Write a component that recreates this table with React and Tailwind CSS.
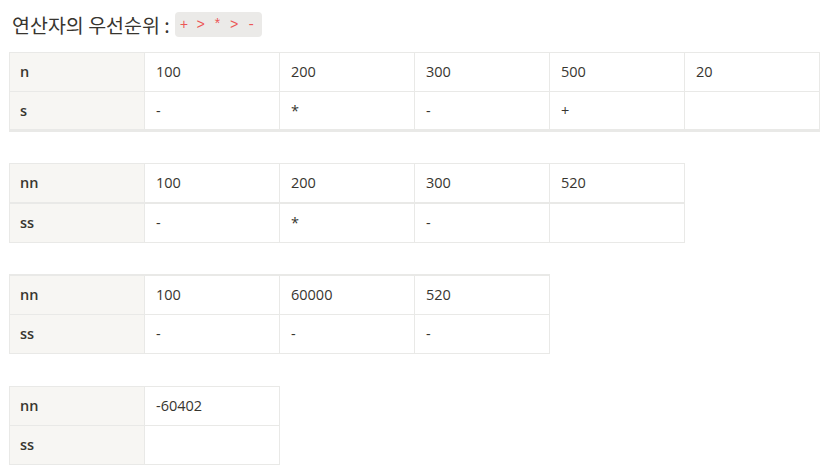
const tables = [
  {
    rows: [
      { head: "n", cells: ["100", "200", "300", "500", "20"] },
      { head: "s", cells: ["-", "*", "-", "+", ""] },
    ],
    thick: "bottom",
    gap: "mt-[15px]",
  },
  {
    rows: [
      { head: "nn", cells: ["100", "200", "300", "520"] },
      { head: "ss", cells: ["-", "*", "-", ""] },
    ],
    thick: "middle",
    gap: "mt-[31px]",
  },
  {
    rows: [
      { head: "nn", cells: ["100", "60000", "520"] },
      { head: "ss", cells: ["-", "-", "-"] },
    ],
    thick: "top",
    gap: "mt-[31px]",
  },
  {
    rows: [
      { head: "nn", cells: ["-60402"] },
      { head: "ss", cells: [""] },
    ],
    thick: "none",
    gap: "mt-[32px]",
  },
];

function Cell({ children, head }) {
  return (
    <div
      className={
        head
          ? "flex h-full w-[135px] shrink-0 items-center border-r border-[#e9e9e7] bg-[#f7f6f3] pl-[10px] font-semibold"
          : "flex h-full w-[135px] shrink-0 items-center border-r border-[#e9e9e7] pl-[11px]"
      }
    >
      {children}
    </div>
  );
}

function DataTable({ table }) {
  const { rows, thick, gap } = table;
  return (
    <div
      className={`${gap} inline-flex flex-col self-start border-l border-[#e9e9e7] ${
        thick === "top" ? "border-t-2" : "border-t"
      } ${thick === "bottom" ? "border-b-2" : ""} border-[#e9e9e7]`}
    >
      {rows.map((row, i) => {
        const rowClass =
          i === 0 && thick === "middle"
            ? "flex h-[40px] border-b-2 border-[#e9e9e7]"
            : i === rows.length - 1 && thick === "bottom"
            ? "flex h-[38px] border-b border-[#e9e9e7]"
            : "flex h-[39px] border-b border-[#e9e9e7]";
        return (
          <div key={i} className={rowClass}>
            <Cell head>{row.head}</Cell>
            {row.cells.map((c, j) => (
              <Cell key={j}>{c}</Cell>
            ))}
          </div>
        );
      })}
    </div>
  );
}

export default function App() {
  return (
    <div className="min-h-[475px] bg-white pl-[9px] text-[14.5px] text-[#37352f] font-['Open_Sans','Noto_Sans_CJK_KR',sans-serif]">
      <div className="flex flex-col">
        <div className="mt-[12px] flex h-[25px] items-center pl-[3px]">
          <span className="text-[19.5px] font-['Noto_Sans_CJK_KR',sans-serif] leading-none">
            연산자의 우선순위 :
          </span>
          <code className="ml-[5px] h-[25px] rounded-[4px] bg-[#ebeae8] pl-[5px] pr-[7px] font-['Liberation_Mono',monospace] text-[14px] leading-[26px] text-[#eb5757] whitespace-pre">
            + &gt; * &gt; -
          </code>
        </div>
        {tables.map((t, i) => (
          <DataTable key={i} table={t} />
        ))}
      </div>
    </div>
  );
}
